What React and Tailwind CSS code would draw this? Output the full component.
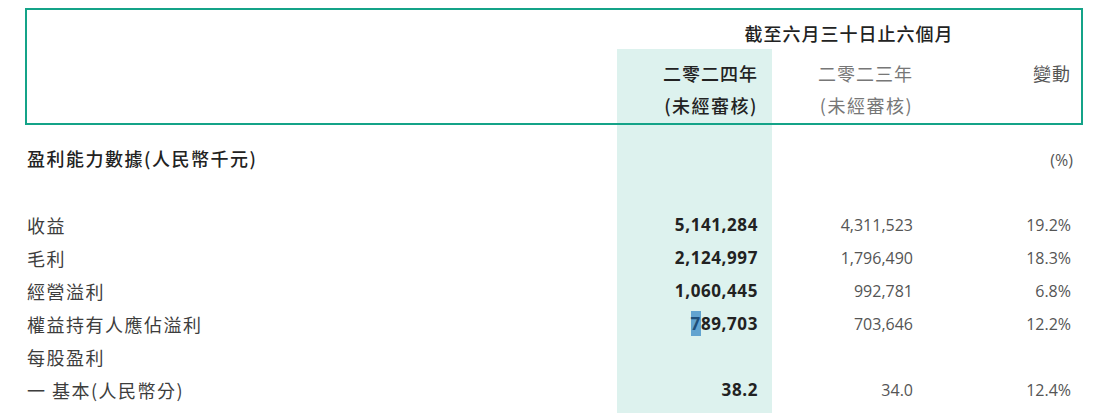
import React from "react";

const cjk = { fontFamily: '"Noto Sans CJK TC", "Noto Sans", sans-serif' };
const num = { fontFamily: '"Open Sans", "Noto Sans", sans-serif' };

const cols = "grid grid-cols-[590px_155px_141px_168px]";

const rows = [
  { label: "收益", cur: "5,141,284", prev: "4,311,523", chg: "19.2%" },
  { label: "毛利", cur: "2,124,997", prev: "1,796,490", chg: "18.3%" },
  { label: "經營溢利", cur: "1,060,445", prev: "992,781", chg: "6.8%" },
  { label: "權益持有人應佔溢利", cur: "789,703", prev: "703,646", chg: "12.2%", sel: true },
  { label: "每股盈利", cur: "", prev: "", chg: "" },
  { label: "一 基本(人民幣分)", cur: "38.2", prev: "34.0", chg: "12.4%" },
];

const Row = ({ label, cur, prev, chg, sel }) => (
  <div className={`${cols} h-[33px] items-center`}>
    <div className="text-[18px] leading-[24px] tracking-[1.5px] text-[#3d3d3d] whitespace-pre" style={cjk}>
      {label}
    </div>
    <div
      className="h-full flex items-center justify-end bg-[#ddf2ee] pr-[14px] text-[17px] font-bold tracking-[0.6px] text-[#222]"
      style={num}
    >
      {sel ? (
        <>
          <span className="bg-[#62a4d0] text-[#1e4f7a]">7</span>
          {cur.slice(1)}
        </>
      ) : (
        cur
      )}
    </div>
    <div className="text-right text-[16px] text-[#555]" style={num}>
      {prev}
    </div>
    <div className="text-right pr-[10px] text-[16px] text-[#555]" style={num}>
      {chg}
    </div>
  </div>
);

export default function App() {
  return (
    <div className="w-[1097px] h-[413px] overflow-hidden bg-white pt-[8px] pl-[25px]">
      <div className="w-[1058px] border-2 border-[#14a388]">
        <div className={cols}>
          <div />
          <div
            className="col-span-3 pt-[11px] pb-[4px] text-center text-[18px] leading-[24px] tracking-[1px] font-medium text-[#222]"
            style={cjk}
          >
            截至六月三十日止六個月
          </div>
        </div>
        <div className={cols}>
          <div />
          <div className="bg-[#ddf2ee] pr-[14px] text-right text-[#222] font-medium" style={cjk}>
            <div className="pt-[12px] h-[40px] text-[18px] leading-[24px] tracking-[1px]">二零二四年</div>
            <div className="pt-[4px] h-[34px] text-[18px] leading-[24px] tracking-[1.5px]">(未經審核)</div>
          </div>
          <div className="text-right text-[#777]" style={cjk}>
            <div className="pt-[12px] h-[40px] text-[18px] leading-[24px] tracking-[1px]">二零二三年</div>
            <div className="pt-[4px] h-[34px] text-[18px] leading-[24px] tracking-[1.5px]">(未經審核)</div>
          </div>
          <div className="text-right pr-[10px] text-[#555]" style={cjk}>
            <div className="pt-[12px] h-[40px] text-[18px] leading-[24px] tracking-[1px]">變動</div>
          </div>
        </div>
      </div>

      <div className="w-[1058px] border-x-2 border-transparent">
        <div className={`${cols} h-[50px]`}>
          <div
            className="pt-[21px] text-[18px] leading-[24px] tracking-[1.5px] font-medium text-[#222]"
            style={cjk}
          >
            盈利能力數據(人民幣千元)
          </div>
          <div className="bg-[#ddf2ee]" />
          <div />
          <div className="pt-[23px] pr-[8px] text-right text-[16px] leading-[24px] text-[#555]" style={num}>
            (%)
          </div>
        </div>
        <div className={`${cols} h-[33px]`}>
          <div />
          <div className="bg-[#ddf2ee]" />
        </div>
        {rows.map((r) => (
          <Row key={r.label} {...r} />
        ))}
        <div className={`${cols} h-[20px]`}>
          <div />
          <div className="bg-[#ddf2ee]" />
        </div>
      </div>
    </div>
  );
}
